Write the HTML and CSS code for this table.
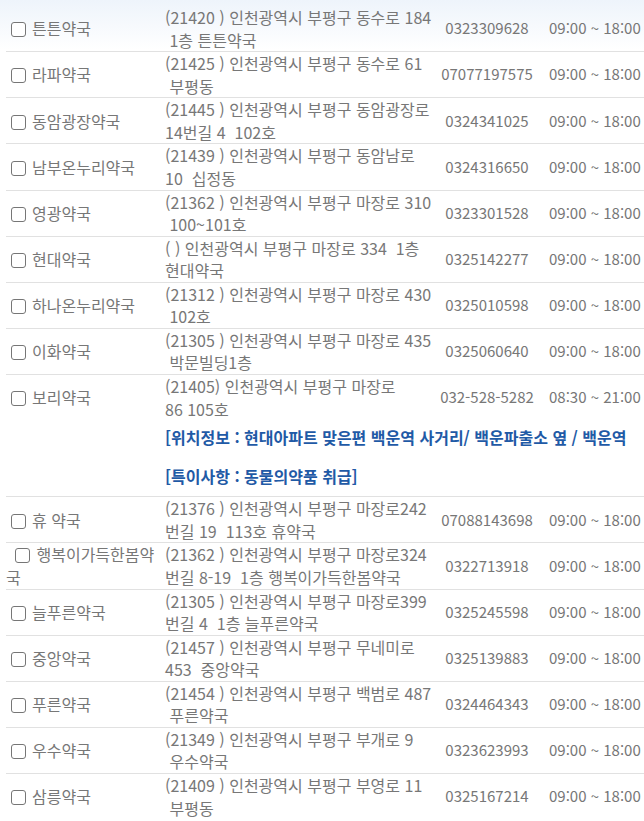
FILE: index.html
```html
<!DOCTYPE html>
<html lang="ko">
<head>
  <meta charset="UTF-8">
  <meta name="viewport" content="width=device-width, initial-scale=1.0">
  <title>약국 목록</title>
  <link rel="stylesheet" href="styles.css">
</head>
<body>
  <div class="list-wrap">
    <table class="pharm-table">
      <colgroup>
        <col class="col-name">
        <col class="col-addr">
        <col class="col-tel">
        <col class="col-time">
      </colgroup>
      <tbody>
        <tr>
          <td class="name"><input type="checkbox" class="chk">튼튼약국</td>
          <td class="addr">(21420 ) 인천광역시 부평구 동수로 184<br>&nbsp;1층 튼튼약국</td>
          <td class="tel">0323309628</td>
          <td class="time">09:00 ~ 18:00</td>
        </tr>
        <tr>
          <td class="name"><input type="checkbox" class="chk">라파약국</td>
          <td class="addr">(21425 ) 인천광역시 부평구 동수로 61<br>&nbsp;부평동</td>
          <td class="tel">07077197575</td>
          <td class="time">09:00 ~ 18:00</td>
        </tr>
        <tr>
          <td class="name"><input type="checkbox" class="chk">동암광장약국</td>
          <td class="addr">(21445 ) 인천광역시 부평구 동암광장로<br>14번길 4 &nbsp;102호</td>
          <td class="tel">0324341025</td>
          <td class="time">09:00 ~ 18:00</td>
        </tr>
        <tr>
          <td class="name"><input type="checkbox" class="chk">남부온누리약국</td>
          <td class="addr">(21439 ) 인천광역시 부평구 동암남로<br>10 &nbsp;십정동</td>
          <td class="tel">0324316650</td>
          <td class="time">09:00 ~ 18:00</td>
        </tr>
        <tr>
          <td class="name"><input type="checkbox" class="chk">영광약국</td>
          <td class="addr">(21362 ) 인천광역시 부평구 마장로 310<br>&nbsp;100~101호</td>
          <td class="tel">0323301528</td>
          <td class="time">09:00 ~ 18:00</td>
        </tr>
        <tr>
          <td class="name"><input type="checkbox" class="chk">현대약국</td>
          <td class="addr">( ) 인천광역시 부평구 마장로 334 &nbsp;1층<br>현대약국</td>
          <td class="tel">0325142277</td>
          <td class="time">09:00 ~ 18:00</td>
        </tr>
        <tr>
          <td class="name"><input type="checkbox" class="chk">하나온누리약국</td>
          <td class="addr">(21312 ) 인천광역시 부평구 마장로 430<br>&nbsp;102호</td>
          <td class="tel">0325010598</td>
          <td class="time">09:00 ~ 18:00</td>
        </tr>
        <tr>
          <td class="name"><input type="checkbox" class="chk">이화약국</td>
          <td class="addr">(21305 ) 인천광역시 부평구 마장로 435<br>&nbsp;박문빌딩1층</td>
          <td class="tel">0325060640</td>
          <td class="time">09:00 ~ 18:00</td>
        </tr>
        <tr class="has-info">
          <td class="name"><input type="checkbox" class="chk">보리약국</td>
          <td class="addr">(21405) 인천광역시 부평구 마장로<br>86 105호</td>
          <td class="tel">032-528-5282</td>
          <td class="time">08:30 ~ 21:00</td>
        </tr>
        <tr class="info-row">
          <td></td>
          <td colspan="3" class="info">
            <p>[위치정보 : 현대아파트 맞은편 백운역 사거리/ 백운파출소 옆 / 백운역</p>
            <p>[특이사항 : 동물의약품 취급]</p>
          </td>
        </tr>
        <tr>
          <td class="name"><input type="checkbox" class="chk">휴 약국</td>
          <td class="addr">(21376 ) 인천광역시 부평구 마장로242<br>번길 19 &nbsp;113호 휴약국</td>
          <td class="tel">07088143698</td>
          <td class="time">09:00 ~ 18:00</td>
        </tr>
        <tr>
          <td class="name">&nbsp;<input type="checkbox" class="chk">행복이가득한봄약국</td>
          <td class="addr">(21362 ) 인천광역시 부평구 마장로324<br>번길 8-19 &nbsp;1층 행복이가득한봄약국</td>
          <td class="tel">0322713918</td>
          <td class="time">09:00 ~ 18:00</td>
        </tr>
        <tr>
          <td class="name"><input type="checkbox" class="chk">늘푸른약국</td>
          <td class="addr">(21305 ) 인천광역시 부평구 마장로399<br>번길 4 &nbsp;1층 늘푸른약국</td>
          <td class="tel">0325245598</td>
          <td class="time">09:00 ~ 18:00</td>
        </tr>
        <tr>
          <td class="name"><input type="checkbox" class="chk">중앙약국</td>
          <td class="addr">(21457 ) 인천광역시 부평구 무네미로<br>453 &nbsp;중앙약국</td>
          <td class="tel">0325139883</td>
          <td class="time">09:00 ~ 18:00</td>
        </tr>
        <tr>
          <td class="name"><input type="checkbox" class="chk">푸른약국</td>
          <td class="addr">(21454 ) 인천광역시 부평구 백범로 487<br>&nbsp;푸른약국</td>
          <td class="tel">0324464343</td>
          <td class="time">09:00 ~ 18:00</td>
        </tr>
        <tr>
          <td class="name"><input type="checkbox" class="chk">우수약국</td>
          <td class="addr">(21349 ) 인천광역시 부평구 부개로 9<br>&nbsp;우수약국</td>
          <td class="tel">0323623993</td>
          <td class="time">09:00 ~ 18:00</td>
        </tr>
        <tr>
          <td class="name"><input type="checkbox" class="chk">삼릉약국</td>
          <td class="addr">(21409 ) 인천광역시 부평구 부영로 11<br>&nbsp;부평동</td>
          <td class="tel">0325167214</td>
          <td class="time">09:00 ~ 18:00</td>
        </tr>
      </tbody>
    </table>
  </div>
</body>
</html>
```

FILE: styles.css
```css
body {
  margin: 0;
  padding: 0;
  font-family: "Noto Sans CJK KR", "Noto Sans", sans-serif;
  font-size: 16px;
  color: #777;
  background: linear-gradient(to bottom, #eef4fb 0, #ffffff 50px) no-repeat;
  overflow: hidden;
}
.list-wrap {
  padding: 6px 0 0 6px;
}
.pharm-table {
  border-collapse: collapse;
  table-layout: fixed;
  width: 674px;
}
.col-name { width: 154px; }
.col-addr { width: 277px; }
.col-tel { width: 100px; }
.col-time { width: 143px; }

.pharm-table td {
  padding: 0;
  line-height: 22.57px;
  vertical-align: middle;
  border-bottom: 1px solid #e1e1e1;
}
.pharm-table tr:last-child td {
  border-bottom: none;
}
.pharm-table .has-info td {
  border-bottom: none;
}
.chk {
  -webkit-appearance: none;
  appearance: none;
  width: 15px;
  height: 15px;
  margin: 0 6px 0 5px;
  border: 1.5px solid #767676;
  border-radius: 3px;
  background: #fff;
  vertical-align: -2px;
}
.pharm-table .addr {
  padding-left: 5px;
  white-space: nowrap;
}
.pharm-table .tel {
  font-size: 15px;
  text-align: center;
  white-space: nowrap;
}
.pharm-table .time {
  font-size: 15px;
  padding-left: 12px;
  white-space: nowrap;
}
.pharm-table .info {
  padding: 6px 0 8.5px 5px;
}
.info p {
  margin: 0;
  color: #1f5aa6;
  font-weight: bold;
  white-space: nowrap;
}
.info p + p {
  margin-top: 16.5px;
}
```
